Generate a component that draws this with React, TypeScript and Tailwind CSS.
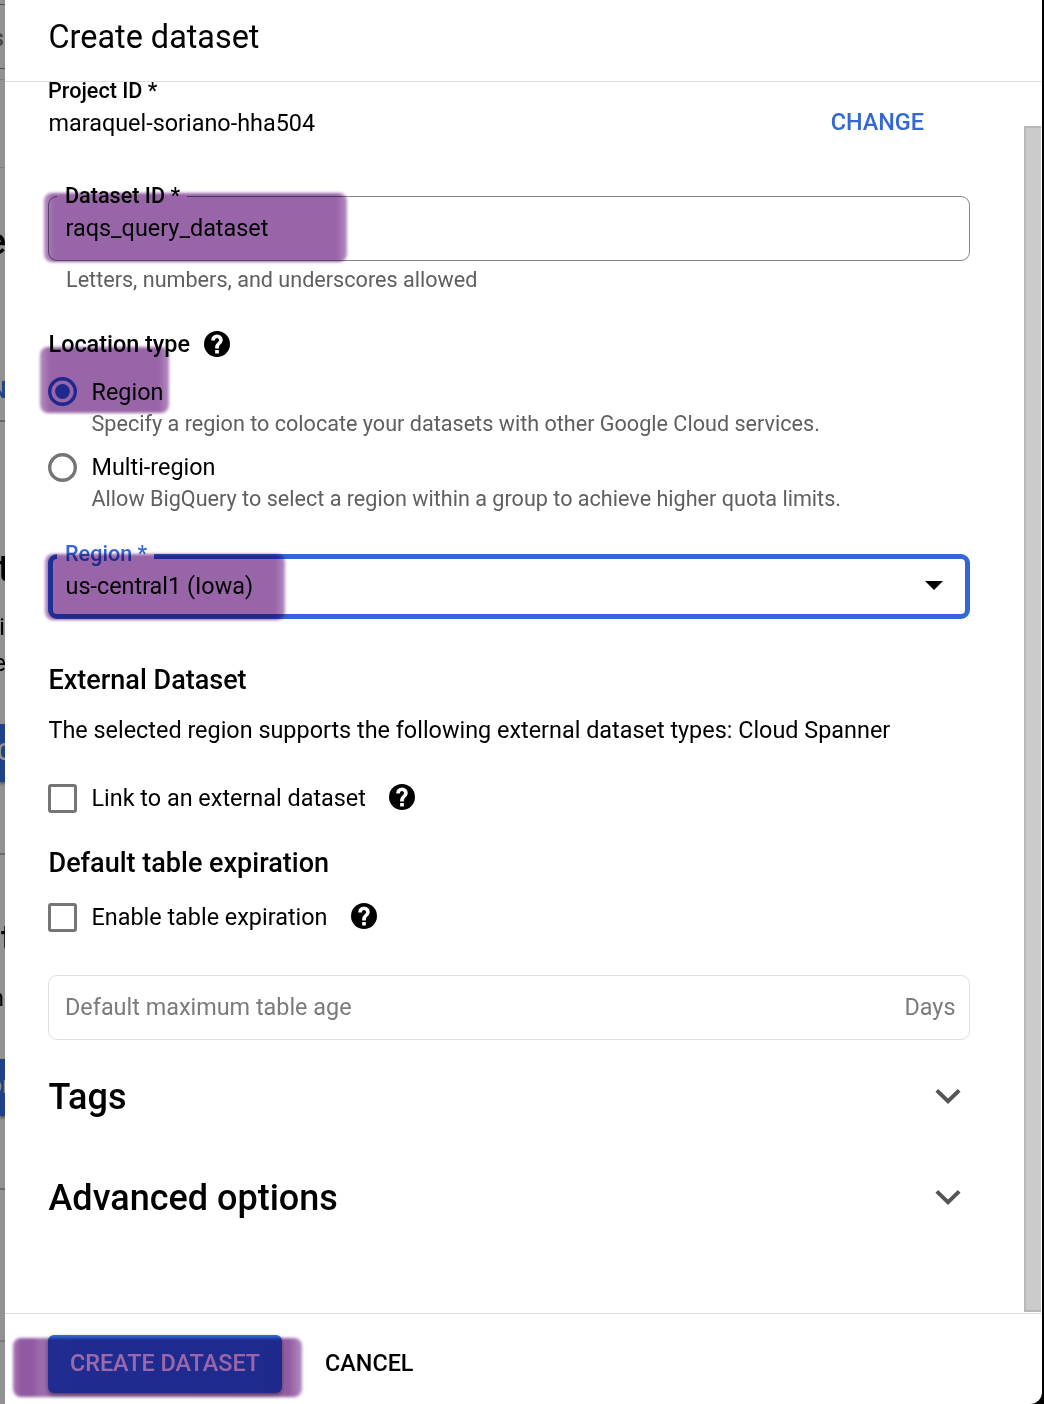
import React from 'react';

function HelpIcon({ className = '' }: { className?: string }) {
  return (
    <svg viewBox="2 2 20 20" className={'h-[26px] w-[26px] shrink-0 ' + className}>
      <circle cx="12" cy="12" r="10" fill="#000" />
      <path
        fill="#fff"
        stroke="#fff"
        strokeWidth="0.8"
        d="M13 19h-2v-2h2v2zm2.07-7.75l-.9.92C13.45 12.9 13 13.5 13 15h-2v-.5c0-1.1.45-2.1 1.17-2.83l1.24-1.26c.37-.36.59-.86.59-1.41 0-1.1-.9-2-2-2s-2 .9-2 2H8c0-2.21 1.79-4 4-4s4 1.79 4 4c0 .88-.36 1.68-.93 2.25z"
      />
    </svg>
  );
}

function Chevron() {
  return (
    <svg viewBox="0 0 26 16" className="mb-[2px] mr-[9px] h-4 w-[26px]">
      <path d="M1.8 2.4 L13 13.2 L24.2 2.4" fill="none" stroke="#555" strokeWidth="3.9" />
    </svg>
  );
}

function Radio({ checked = false }: { checked?: boolean }) {
  const color = checked ? '#3367d6' : '#757575';
  return (
    <svg viewBox="0 0 29 29" className="h-[29px] w-[29px] shrink-0">
      <circle cx="14.5" cy="14.5" r="12.8" fill="none" stroke={color} strokeWidth="3.4" />
      {checked && <circle cx="14.5" cy="14.5" r="7.4" fill={color} />}
    </svg>
  );
}

function CheckRow({ label, className }: { label: string; className: string }) {
  return (
    <div className={'flex h-[29px] items-center ' + className}>
      <span className="h-[29px] w-[29px] shrink-0 rounded-[3px] border-[3px] border-[#757575]" />
      <span className="ml-[14.5px] text-[23.4px]">{label}</span>
      <HelpIcon className="mb-[3px] ml-[23.5px]" />
    </div>
  );
}

function Marker({ className }: { className: string }) {
  return (
    <div
      className={
        'pointer-events-none absolute rounded-[8px] mix-blend-multiply blur-[1.4px] ' + className
      }
    />
  );
}

function Backdrop() {
  return (
    <div className="relative h-full w-[5px] shrink-0 overflow-hidden bg-[#929292]">
      <div className="absolute top-[4px] h-px w-full bg-[#4b5158]" />
      <div className="absolute top-[68px] h-px w-full bg-[#4b5158]" />
      <div className="absolute top-[79px] h-px w-full bg-[#808080]" />
      <div className="absolute top-[167px] h-px w-full bg-[#808080]" />
      <span className="absolute right-[1px] top-[23px] text-[23.4px] font-medium leading-[30px] text-[#444]">s</span>
      <span className="absolute right-[-1px] top-[222px] text-[36px] font-medium leading-[40px]">e</span>
      <span className="absolute left-[-10px] top-[375px] text-[23.4px] font-medium leading-[30px] text-[#20408a]">N</span>
      <div className="absolute top-[420px] h-[2px] w-full bg-[#666]" />
      <span className="absolute left-[-2px] top-[549px] text-[36px] font-medium leading-[40px]">t</span>
      <span className="absolute right-0 top-[612px] text-[23.4px] leading-[30px]">si</span>
      <span className="absolute right-[-1px] top-[648px] text-[23.4px] leading-[30px]">e</span>
      <div className="absolute top-[724px] h-[58px] w-full bg-[#20408a] shadow-[0_2px_3px_#555]" />
      <span className="absolute left-[-3px] top-[737px] text-[23.4px] font-medium leading-[30px] text-[#929292]">C</span>
      <div className="absolute top-[853px] h-[2px] w-full bg-[#6a6a6a]" />
      <span className="absolute left-[1px] top-[919px] text-[36px] font-medium leading-[40px]">t</span>
      <span className="absolute right-[1px] top-[983px] text-[23.4px] leading-[30px]">n</span>
      <div className="absolute top-[1059px] h-[57px] w-full bg-[#20408a] shadow-[0_2px_3px_#555]" />
      <span className="absolute left-[-11px] top-[1070px] text-[23.4px] leading-[30px] text-[#929292]">or</span>
      <div className="absolute top-[1188px] h-[2px] w-full bg-[#6a6a6a]" />
      <div className="absolute top-[1340px] h-[2px] w-full bg-[#7a7a7a]" />
    </div>
  );
}

export default function App() {
  return (
    <div className="relative isolate flex h-[1404px] w-[1044px] overflow-hidden whitespace-nowrap bg-white font-['Roboto',sans-serif] text-black">
      <Backdrop />
      <div className="flex min-w-0 flex-1 bg-black">
        <main className="flex w-[1037px] flex-col rounded-br-[12px] bg-white">
          <header className="flex h-[82px] shrink-0 items-center border-b border-[#dfdfdf] pb-[7px] pl-[43.5px]">
            <h1 className="text-[32.4px] leading-[38px]">Create dataset</h1>
          </header>

          <div className="flex h-[1231px] shrink-0 justify-between pl-[43px]">
            <div className="flex w-[922px] flex-col">
              <div className="h-[18px] text-[21.6px] font-medium leading-[18px]">Project ID *</div>
              <div className="mt-[8px] flex h-[30px] items-center justify-between pr-[46px]">
                <span className="pl-[0.5px] pt-[2px] text-[23.4px]">maraquel-soriano-hha504</span>
                <button className="text-[23.4px] font-medium text-[#3367d6]">CHANGE</button>
              </div>

              <div className="relative mt-[58px] flex h-[65px] shrink-0 items-center rounded-[9px] border border-[#80868b] pl-[16.5px]">
                <span className="absolute -top-[16px] left-[8px] bg-white pl-[8px] pr-[7px] text-[21.6px] font-medium leading-[30px]">
                  Dataset ID *
                </span>
                <span className="text-[23.4px]">raqs_query_dataset</span>
              </div>
              <div className="mt-[4px] h-[30px] pl-[18px] text-[21.6px] leading-[30px] text-[#5f5f5f]">
                Letters, numbers, and underscores allowed
              </div>

              <div className="mt-[34px] flex h-[30px] items-center text-[23.4px] font-medium">
                <span className="pl-[0.5px] pt-[2px]">Location type</span>
                <HelpIcon className="ml-[14px]" />
              </div>
              <div className="mt-[18px] flex h-[29px] items-center gap-[14.5px] text-[23.4px]">
                <Radio checked />
                <span className="pt-[2px]">Region</span>
              </div>
              <div className="mt-[3px] h-[30px] pl-[43.5px] text-[21.6px] leading-[30px] text-[#5f5f5f]">
                Specify a region to colocate your datasets with other Google Cloud services.
              </div>
              <div className="mt-[14px] flex h-[29px] items-center gap-[14.5px] text-[23.4px]">
                <Radio />
                Multi-region
              </div>
              <div className="mt-[2px] h-[30px] pl-[43.5px] text-[21.6px] leading-[30px] text-[#5f5f5f]">
                Allow BigQuery to select a region within a group to achieve higher quota limits.
              </div>

              <div className="relative mt-[40px] flex h-[65px] shrink-0 items-center justify-between rounded-[9px] border-[5px] border-[#3367d6] pl-[12.5px] pr-[22px]">
                <span className="absolute -top-[20px] left-[4px] bg-white pl-[8px] pr-[7px] text-[21.6px] font-medium leading-[30px] text-[#3367d6]">
                  Region *
                </span>
                <span className="text-[23.4px]">us-central1 (Iowa)</span>
                <svg viewBox="0 0 18 9" className="mb-[2px] h-[9px] w-[18px]">
                  <path d="M0 0H18L9 9Z" />
                </svg>
              </div>

              <h2 className="mt-[46px] h-[30px] pl-[0.5px] text-[27px] font-medium leading-[30px]">
                External Dataset
              </h2>
              <p className="mt-[20px] h-[30px] pl-[0.5px] text-[23.4px] leading-[30px]">
                The selected region supports the following external dataset types: Cloud Spanner
              </p>
              <CheckRow className="mt-[39px]" label="Link to an external dataset" />
              <h2 className="mt-[35px] h-[30px] pl-[0.5px] text-[27px] font-medium leading-[30px]">
                Default table expiration
              </h2>
              <CheckRow className="mt-[25px]" label="Enable table expiration" />

              <div className="mt-[43px] flex h-[65px] shrink-0 items-center justify-between rounded-[9px] border border-[#e0e0e0] pl-[16px] pr-[13.5px] text-[23.4px] text-[#7b7b7b]">
                <span>Default maximum table age</span>
                <span>Days</span>
              </div>

              <div className="mt-[37px] flex h-[40px] items-center justify-between">
                <h2 className="pl-[0.5px] text-[36px] font-medium">Tags</h2>
                <Chevron />
              </div>
              <div className="mt-[61px] flex h-[40px] items-center justify-between">
                <h2 className="pl-[0.5px] text-[36px] font-medium">Advanced options</h2>
                <Chevron />
              </div>
            </div>

            <div className="mr-[1px] mt-[44px] h-[1186px] w-[17px] border-y-2 border-l-2 border-[#b8b8b8] bg-[#cbcbcb]" />
          </div>

          <footer className="flex flex-1 items-start border-t border-[#dfdfdf] pl-[43px] pt-[21px]">
            <button className="h-[58px] w-[234px] rounded-[6px] bg-[#3367d6] text-[23.4px] font-medium text-white shadow-[0_2px_4px_rgba(0,0,0,0.45)]">
              CREATE DATASET
            </button>
            <button className="ml-[43px] h-[58px] text-[23.4px] font-medium">CANCEL</button>
          </footer>
        </main>
      </div>

      <Marker className="left-[44px] top-[193px] h-[69px] w-[303px] bg-[linear-gradient(90deg,#b48cc0_0,#9865a8_10px,#9865a8_calc(100%-10px),#b48cc0_100%)]" />
      <Marker className="left-[40px] top-[347px] h-[66px] w-[129px] bg-[linear-gradient(90deg,#b48cc0_0,#9865a8_10px,#9865a8_calc(100%-10px),#b48cc0_100%)]" />
      <Marker className="left-[45px] top-[554px] h-[66px] w-[240px] bg-[linear-gradient(90deg,#b48cc0_0,#9865a8_10px,#9865a8_calc(100%-10px),#b48cc0_100%)]" />
      <Marker className="left-[13px] top-[1338px] h-[59px] w-[289px] bg-[linear-gradient(90deg,#a878b5_0,#9059a1_8px,#9059a1_20px,#9c6bac_26px,#9865a8_calc(100%-22px),#9059a1_calc(100%-14px),#b48cc0_100%)]" />
    </div>
  );
}
